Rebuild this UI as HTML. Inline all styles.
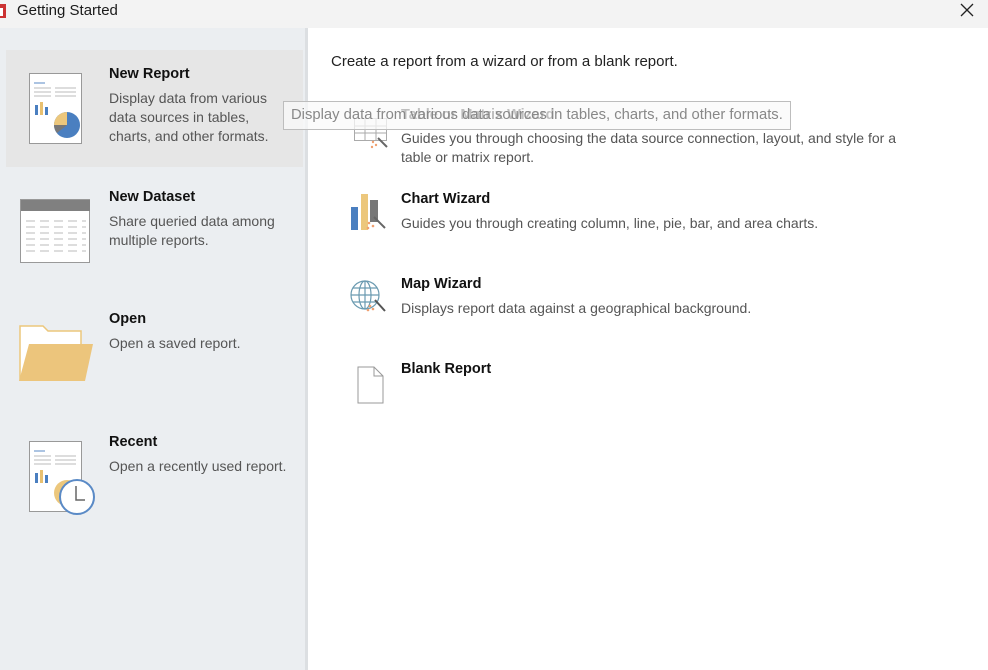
<!DOCTYPE html>
<html><head><meta charset="utf-8"><style>
*{margin:0;padding:0;box-sizing:border-box}
body{width:988px;height:670px;overflow:hidden;background:#fff;font-family:"Liberation Sans",sans-serif;position:relative}
.title{position:absolute;left:0;top:0;width:988px;height:28px;background:#f3f3f3;}
.title span{position:absolute;left:17px;top:2px;font-size:15px;color:#1a1a1a}
.left{position:absolute;left:0;top:28px;width:305px;height:642px;background:#ebeef1}
.sep{position:absolute;left:305px;top:28px;width:3px;height:642px;background:#dcdfe2}
.hl{position:absolute;left:6px;top:50px;width:297px;height:117px;background:#e6e6e6}
.h{position:absolute;font-size:14.5px;font-weight:bold;color:#111}
.d{position:absolute;font-size:14px;color:#555;line-height:19px;white-space:nowrap}
svg{position:absolute}
.tip{position:absolute;left:283px;top:101px;width:508px;height:29px;border:1px solid #bdbdbd;background:rgba(250,250,250,.75);font-size:14.8px;color:#888;padding:5px 0 0 7px;white-space:nowrap}
</style></head><body>
<div class="title"><svg style="left:0;top:2px" width="8" height="16"><rect x="-4" y="2" width="10" height="14" fill="#c33"/><rect x="0" y="6" width="3" height="8" fill="#fff"/></svg><span>Getting Started</span><svg style="left:960px;top:3px" width="14" height="14"><path d="M1 1 L13 13 M13 1 L1 13" stroke="#222" stroke-width="1.3"/></svg></div>
<div class="left"></div><div class="sep"></div>
<div class="hl"></div>

<svg style="left:29px;top:73px" width="56" height="72"><rect x=".5" y=".5" width="52" height="70" fill="#fff" stroke="#999"/><line x1="5" y1="10" x2="16" y2="10" stroke="#5a8ac6"/><g stroke="#bbb"><line x1="5" y1="15" x2="22" y2="15"/><line x1="26" y1="15" x2="47" y2="15"/><line x1="5" y1="19" x2="22" y2="19"/><line x1="26" y1="19" x2="47" y2="19"/><line x1="5" y1="23" x2="22" y2="23"/><line x1="26" y1="23" x2="47" y2="23"/></g><rect x="6" y="32" width="3" height="10" fill="#4a7fc0"/><rect x="11" y="29" width="3" height="13" fill="#e8c070"/><rect x="16" y="34" width="3" height="8" fill="#4a7fc0"/><circle cx="38" cy="52" r="13" fill="#4a7fc0"/><path d="M38 52 L25 52 A13 13 0 0 1 38 39Z" fill="#ecc77c"/><path d="M38 52 L28 60 A13 13 0 0 1 25 52Z" fill="#777"/></svg>
<div class="h" style="left:109px;top:66px">New Report</div>
<div class="d" style="left:109px;top:89px">Display data from various<br>data sources in tables,<br>charts, and other formats.</div>

<svg style="left:20px;top:199px" width="71" height="65"><rect x=".5" y=".5" width="69" height="63" fill="#fff" stroke="#999"/><rect x="1" y="1" width="69" height="11" fill="#808080"/><g stroke="#bbb" stroke-dasharray="9 5"><line x1="6" y1="22" x2="66" y2="22"/><line x1="6" y1="28" x2="66" y2="28"/><line x1="6" y1="34" x2="66" y2="34"/><line x1="6" y1="40" x2="66" y2="40"/><line x1="6" y1="46" x2="66" y2="46"/><line x1="6" y1="52" x2="66" y2="52"/></g></svg>
<div class="h" style="left:109px;top:189px">New Dataset</div>
<div class="d" style="left:109px;top:212px">Share queried data among<br>multiple reports.</div>

<svg style="left:18px;top:324px" width="76" height="58"><path d="M2 2 H25 L30 7 H63 V56 H2Z" fill="#fff" stroke="#ecc77c" stroke-width="1.5"/><path d="M11 20 H75 L67 57 H1Z" fill="#ecc57c"/></svg>
<div class="h" style="left:109px;top:311px">Open</div>
<div class="d" style="left:109px;top:334px">Open a saved report.</div>

<svg style="left:29px;top:441px" width="68" height="76"><rect x=".5" y=".5" width="52" height="70" fill="#fff" stroke="#999"/><line x1="5" y1="10" x2="16" y2="10" stroke="#5a8ac6"/><g stroke="#bbb"><line x1="5" y1="15" x2="22" y2="15"/><line x1="26" y1="15" x2="47" y2="15"/><line x1="5" y1="19" x2="22" y2="19"/><line x1="26" y1="19" x2="47" y2="19"/><line x1="5" y1="23" x2="22" y2="23"/><line x1="26" y1="23" x2="47" y2="23"/></g><rect x="6" y="32" width="3" height="10" fill="#4a7fc0"/><rect x="11" y="29" width="3" height="13" fill="#e8c070"/><rect x="16" y="34" width="3" height="8" fill="#4a7fc0"/><circle cx="38" cy="52" r="13" fill="#ecc77c"/><circle cx="48" cy="56" r="17" fill="#fff" stroke="#5a8ac6" stroke-width="2"/><path d="M47 45 V59 H56" fill="none" stroke="#666" stroke-width="1.5"/></svg>
<div class="h" style="left:109px;top:434px">Recent</div>
<div class="d" style="left:109px;top:457px">Open a recently used report.</div>

<div class="d" style="left:331px;top:52px;color:#222;font-size:15px">Create a report from a wizard or from a blank report.</div>

<svg style="left:353px;top:114px" width="40" height="36"><g stroke="#aaa" fill="none"><rect x="1.5" y="4.5" width="32" height="22"/><line x1="1.5" y1="12" x2="33" y2="12"/><line x1="1.5" y1="19" x2="33" y2="19"/><line x1="12" y1="4" x2="12" y2="27"/><line x1="23" y1="4" x2="23" y2="27"/></g><line x1="25" y1="24" x2="34" y2="33" stroke="#666" stroke-width="2"/><circle cx="20" cy="28" r="1.2" fill="#f0a070"/><circle cx="23" cy="31" r="1.2" fill="#f0a070"/><circle cx="19" cy="33" r="1.2" fill="#f0a070"/></svg>
<div class="h" style="left:401px;top:107px">Table or Matrix Wizard</div>
<div class="d" style="left:401px;top:129px">Guides you through choosing the data source connection, layout, and style for a<br>table or matrix report.</div>

<svg style="left:350px;top:193px" width="40" height="40"><rect x="1" y="14" width="7" height="23" fill="#4a7fc0"/><rect x="11" y="1" width="7" height="36" fill="#ecc77c"/><rect x="20" y="7" width="8" height="22" fill="#777"/><line x1="24" y1="24" x2="35" y2="35" stroke="#666" stroke-width="2"/><circle cx="19" cy="30" r="1.3" fill="#f0a070"/><circle cx="23" cy="33" r="1.3" fill="#f0a070"/><circle cx="18" cy="35" r="1.3" fill="#f0a070"/></svg>
<div class="h" style="left:401px;top:191px">Chart Wizard</div>
<div class="d" style="left:401px;top:214px">Guides you through creating column, line, pie, bar, and area charts.</div>

<svg style="left:349px;top:278px" width="42" height="38"><g fill="none" stroke="#6a9ab0" stroke-width="1.2"><circle cx="16" cy="17" r="14"/><ellipse cx="16" cy="17" rx="6" ry="14"/><line x1="2" y1="17" x2="30" y2="17"/><line x1="4" y1="10" x2="28" y2="10"/><line x1="4" y1="24" x2="28" y2="24"/><line x1="16" y1="3" x2="16" y2="31"/></g><line x1="26" y1="22" x2="36" y2="33" stroke="#555" stroke-width="2"/><circle cx="21" cy="28" r="1.3" fill="#f0a070"/><circle cx="24" cy="31" r="1.3" fill="#f0a070"/><circle cx="19" cy="32" r="1.3" fill="#f0a070"/></svg>
<div class="h" style="left:401px;top:276px">Map Wizard</div>
<div class="d" style="left:401px;top:299px">Displays report data against a geographical background.</div>

<svg style="left:357px;top:366px" width="28" height="38"><path d="M1 1 H17 L26 10 V37 H1Z M17 1 V10 H26" fill="#fff" stroke="#999"/></svg>
<div class="h" style="left:401px;top:361px">Blank Report</div>

<div class="tip">Display data from various data sources in tables, charts, and other formats.</div>
</body></html>
